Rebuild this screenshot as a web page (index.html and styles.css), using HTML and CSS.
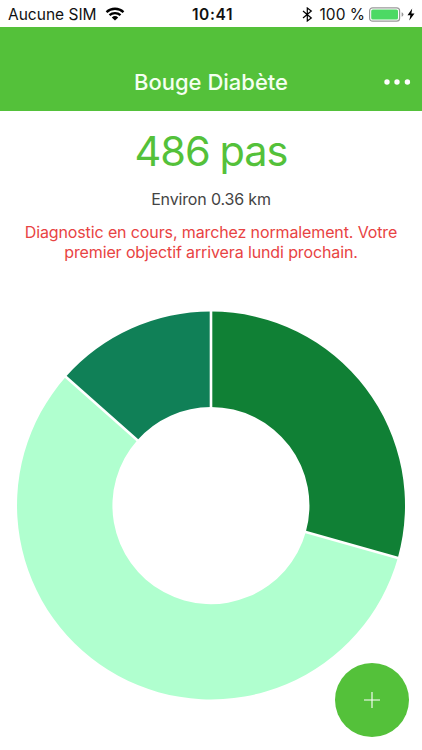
FILE: index.html
```html
<!DOCTYPE html>
<html lang="fr">
<head>
<meta charset="utf-8">
<title>Bouge Diabète</title>
<link rel="stylesheet" href="styles.css">
</head>
<body>
<div class="status">
  <div class="status-side">
    <span class="carrier">Aucune SIM</span>
    <svg class="wifi" width="20" height="14" viewBox="0 0 20 14" fill="none" stroke="#000" stroke-width="2.3"><path d="M1.5 5.1a12.4 12.4 0 0 1 17 0M4.5 8.2a8.1 8.1 0 0 1 11 0"/><path d="M10 13.5 6.8 10.4a4.7 4.7 0 0 1 6.4 0Z" fill="#000" stroke="none"/></svg>
  </div>
  <time class="clock">10:41</time>
  <div class="status-side right">
    <svg class="bluetooth" width="11" height="15" viewBox="0 0 11 15" fill="none" stroke="#000" stroke-width="1.2"><path d="m1 4 8.3 7L5.3 14V1l4 3L1 11"/></svg>
    <span class="percent">100 %</span>
    <svg class="battery" width="36" height="15" viewBox="0 0 36 15"><rect x=".6" y=".8" width="30" height="13.4" rx="3" fill="#fff" stroke="#999" stroke-width="1.2"/><rect x="2.2" y="2.4" width="26.8" height="10.2" rx="1.6" fill="#4cd964"/><path d="M32.6 5.2q1.8.6 1.8 2.3t-1.8 2.3Z" fill="#999"/></svg>
    <svg class="bolt" width="8" height="13" viewBox="0 0 8 13"><path d="M5.2.5.5 7.2h2.9L2.3 12.5 7.5 5.5H4.4Z"/></svg>
  </div>
</div>
<header class="bar">
  <h1 class="title">Bouge Diabète</h1>
  <svg class="more" width="28" height="6" viewBox="0 0 28 6" fill="#fff"><circle cx="4" cy="3" r="2.7"/><circle cx="14" cy="3" r="2.7"/><circle cx="24.4" cy="3" r="2.7"/></svg>
</header>
<main class="content">
  <p class="steps">486 pas</p>
  <p class="distance">Environ 0.36 km</p>
  <p class="notice">Diagnostic en cours, marchez normalement. Votre<br>premier objectif arrivera lundi prochain.</p>
  <svg class="chart" width="422" height="411" viewBox="0 0 422 411">
    <path fill="#108035" d="M211 11.5A194 194 0 0 1 397.8 257.9L305.8 232.1A98.5 98.5 0 0 0 211 107Z"/>
    <path fill="#b0ffcf" d="M397.8 257.9A194 194 0 1 1 65.8 76.8L137.3 140.2A98.5 98.5 0 1 0 305.8 232.1Z"/>
    <path fill="#108057" d="M65.8 76.8A194 194 0 0 1 211 11.5V107A98.5 98.5 0 0 0 137.3 140.2Z"/>
    <path stroke="#fff" stroke-width="2.6" d="M211 10V109M399.7 258.4 303.9 231.5M64.3 75.5 138.8 141.5"/>
  </svg>
</main>
<button class="add" aria-label="Ajouter"><svg width="18" height="18" viewBox="0 0 18 18" stroke="#fff" stroke-width="1.1"><path d="M9 1v16M1 9h16"/></svg></button>
</body>
</html>
```
FILE: styles.css
```css
* { box-sizing: border-box; }
body {
  margin: 0;
  height: 750px;
  overflow: hidden;
  background: #fff;
  font-family: Inter, "Liberation Sans", sans-serif;
}
h1, p { margin: 0; }
svg { display: block; flex: none; }
.status {
  display: grid;
  grid-template-columns: 1fr auto 1fr;
  align-items: center;
  height: 27px;
  padding: 1px 7px 0 8px;
  font-size: 15.5px;
  color: #111;
  white-space: nowrap;
}
.status-side { display: flex; align-items: center; }
.right { justify-content: flex-end; }
.wifi { margin-left: 8px; }
.clock { margin-left: 2px; font-weight: 600; letter-spacing: 0.6px; }
.percent { margin: 0 4px 0 7px; }
.bolt { margin-left: 2px; }
.bar {
  display: grid;
  grid-template-columns: 1fr auto 1fr;
  align-items: center;
  height: 84px;
  padding: 26px 11px 0;
  background: #54c13a;
}
.title {
  grid-column: 2;
  font-size: 22px;
  font-weight: 500;
  line-height: 28px;
  color: #f4fff1;
  white-space: nowrap;
}
.more { justify-self: end; }
.content { text-align: center; white-space: nowrap; }
.steps {
  padding-top: 14px;
  font-size: 41.5px;
  line-height: 52px;
  letter-spacing: -1px;
  word-spacing: -1px;
  color: #54c13a;
}
.distance {
  margin-top: 12px;
  font-size: 16px;
  line-height: 20px;
  letter-spacing: -0.15px;
  color: #444;
}
.notice {
  margin-top: 13px;
  font-size: 16px;
  line-height: 20px;
  letter-spacing: -0.12px;
  color: #e84343;
}
.chart { margin-top: 38px; }
.add {
  position: absolute;
  left: 334.5px;
  top: 662.5px;
  display: flex;
  align-items: center;
  justify-content: center;
  width: 74px;
  height: 74px;
  padding: 0;
  border: 0;
  border-radius: 50%;
  background: #54c13a;
}
```
